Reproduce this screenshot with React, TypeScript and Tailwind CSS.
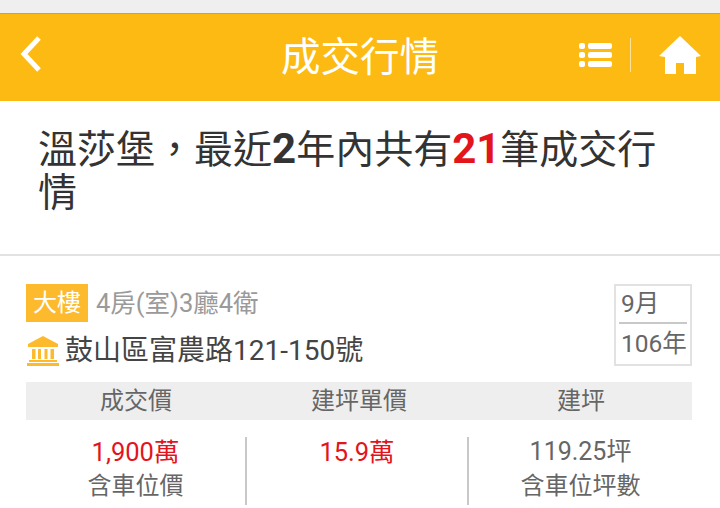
import type { ReactNode } from 'react';

const FONT = "font-['Roboto','Noto_Sans_CJK_TC',sans-serif]";

function Cell({ children, divider }: { children: ReactNode; divider?: boolean }) {
  return (
    <div className={['h-[68px]', divider ? 'border-r-2 border-[#c8c8c8]' : ''].join(' ')}>
      <div className="-mt-[2px] flex flex-col items-center">{children}</div>
    </div>
  );
}

export default function App() {
  return (
    <div className={`${FONT} h-[508px] w-[720px] overflow-hidden bg-white`}>
      <div className="h-[13px] bg-[#efefef]" />
      <header className="grid h-[88px] grid-cols-[142px_1fr_142px] items-center border-t border-[#cfa52f] bg-[#fdba12] text-white">
        <div className="pb-[7px] pl-[19px]">
          <svg width="24" height="38" viewBox="0 0 24 38" fill="none">
            <path d="M20 3 L5 19 L20 35" stroke="white" strokeWidth="5" strokeLinejoin="miter" />
          </svg>
        </div>
        <h1 className="m-0 text-center text-[39.5px] font-normal leading-none">成交行情</h1>
        <div className="flex items-center pb-[6px]">
          <svg width="34" height="26" viewBox="0 0 34 26" fill="white" className="ml-[1px]">
            <rect x="0" y="1" width="6" height="6" rx="2" />
            <rect x="9" y="1" width="24" height="6" rx="2" />
            <rect x="0" y="10" width="6" height="6" rx="2" />
            <rect x="9" y="10" width="24" height="6" rx="2" />
            <rect x="0" y="19" width="6" height="6" rx="2" />
            <rect x="9" y="19" width="24" height="6" rx="2" />
          </svg>
          <span className="ml-[17px] h-[34px] w-px bg-[#fde39a]" />
          <svg width="42" height="38" viewBox="0 0 42 38" fill="white" className="ml-[28px]">
            <path d="M21 0 L42 20 L37 21 L37 38 L25 38 L25 27 L17 27 L17 38 L6 38 L6 21 L0 20 Z" />
          </svg>
        </div>
      </header>

      <section className="h-[155px] border-b-2 border-[#e2e2e2] pl-[38px] pr-[40px] pt-[26px] text-[39px] leading-[43px] text-[#333]">
        溫莎堡，最近<b className="text-[42px] text-[#333]">2</b>年內共有<b className="text-[42px] text-[#e3141c]">21</b>筆成交行情
      </section>

      <section className="pl-[26px] pr-[28px] pt-[28px]">
        <div className="flex justify-between">
          <div>
            <div className="flex items-center">
              <span className="flex h-[38px] w-[62px] items-center justify-center bg-[#fdba2c] text-[24px] text-white">大樓</span>
              <span className="ml-[8px] text-[25.5px] text-[#9a9a9a]">4房(室)3廳4衛</span>
            </div>
            <div className="mt-[9px] flex items-center">
              <svg width="32" height="30" viewBox="0 0 32 30" fill="#fdba2c" className="ml-[1px]">
                <path d="M16 0 L31 8 L31 11 L1 11 L1 8 Z" />
                <rect x="5" y="13" width="3.5" height="10" />
                <rect x="11" y="13" width="3" height="10" />
                <rect x="17.5" y="13" width="3" height="10" />
                <rect x="23.5" y="13" width="3.5" height="10" />
                <rect x="2" y="24" width="28" height="2" />
                <rect x="0" y="27" width="32" height="3" />
              </svg>
              <span className="ml-[6px] text-[28px] leading-[40px] text-[#444]">鼓山區富農路121-150號</span>
            </div>
          </div>
          <div className="h-[82px] w-[78px] whitespace-nowrap border-2 border-[#e2e2e2] px-[3px] text-[24.5px] text-[#666]">
            <div className="border-b-2 border-[#c8c8c8] pl-[2px] leading-[36px]">9月</div>
            <div className="pl-[2px] leading-[40px]">106年</div>
          </div>
        </div>

        <div className="mt-[11px] grid h-[38px] grid-cols-3 items-center bg-[#eeeeee] pb-[1px] text-center text-[24px] text-[#666]">
          <div className="pr-[2px]">成交價</div>
          <div>建坪單價</div>
          <div>建坪</div>
        </div>

        <div className="mt-[17px] grid grid-cols-[221px_222px_1fr] text-[24px] leading-[34px]">
          <Cell divider>
            <span className="text-[25.5px] text-[#e3141c]">1,900萬</span>
            <span className="text-[#666]">含車位價</span>
          </Cell>
          <Cell divider>
            <span className="text-[25.5px] text-[#e3141c]">15.9萬</span>
          </Cell>
          <Cell>
            <span className="text-[25px] text-[#666]">119.25坪</span>
            <span className="text-[#666]">含車位坪數</span>
          </Cell>
        </div>
      </section>
    </div>
  );
}
